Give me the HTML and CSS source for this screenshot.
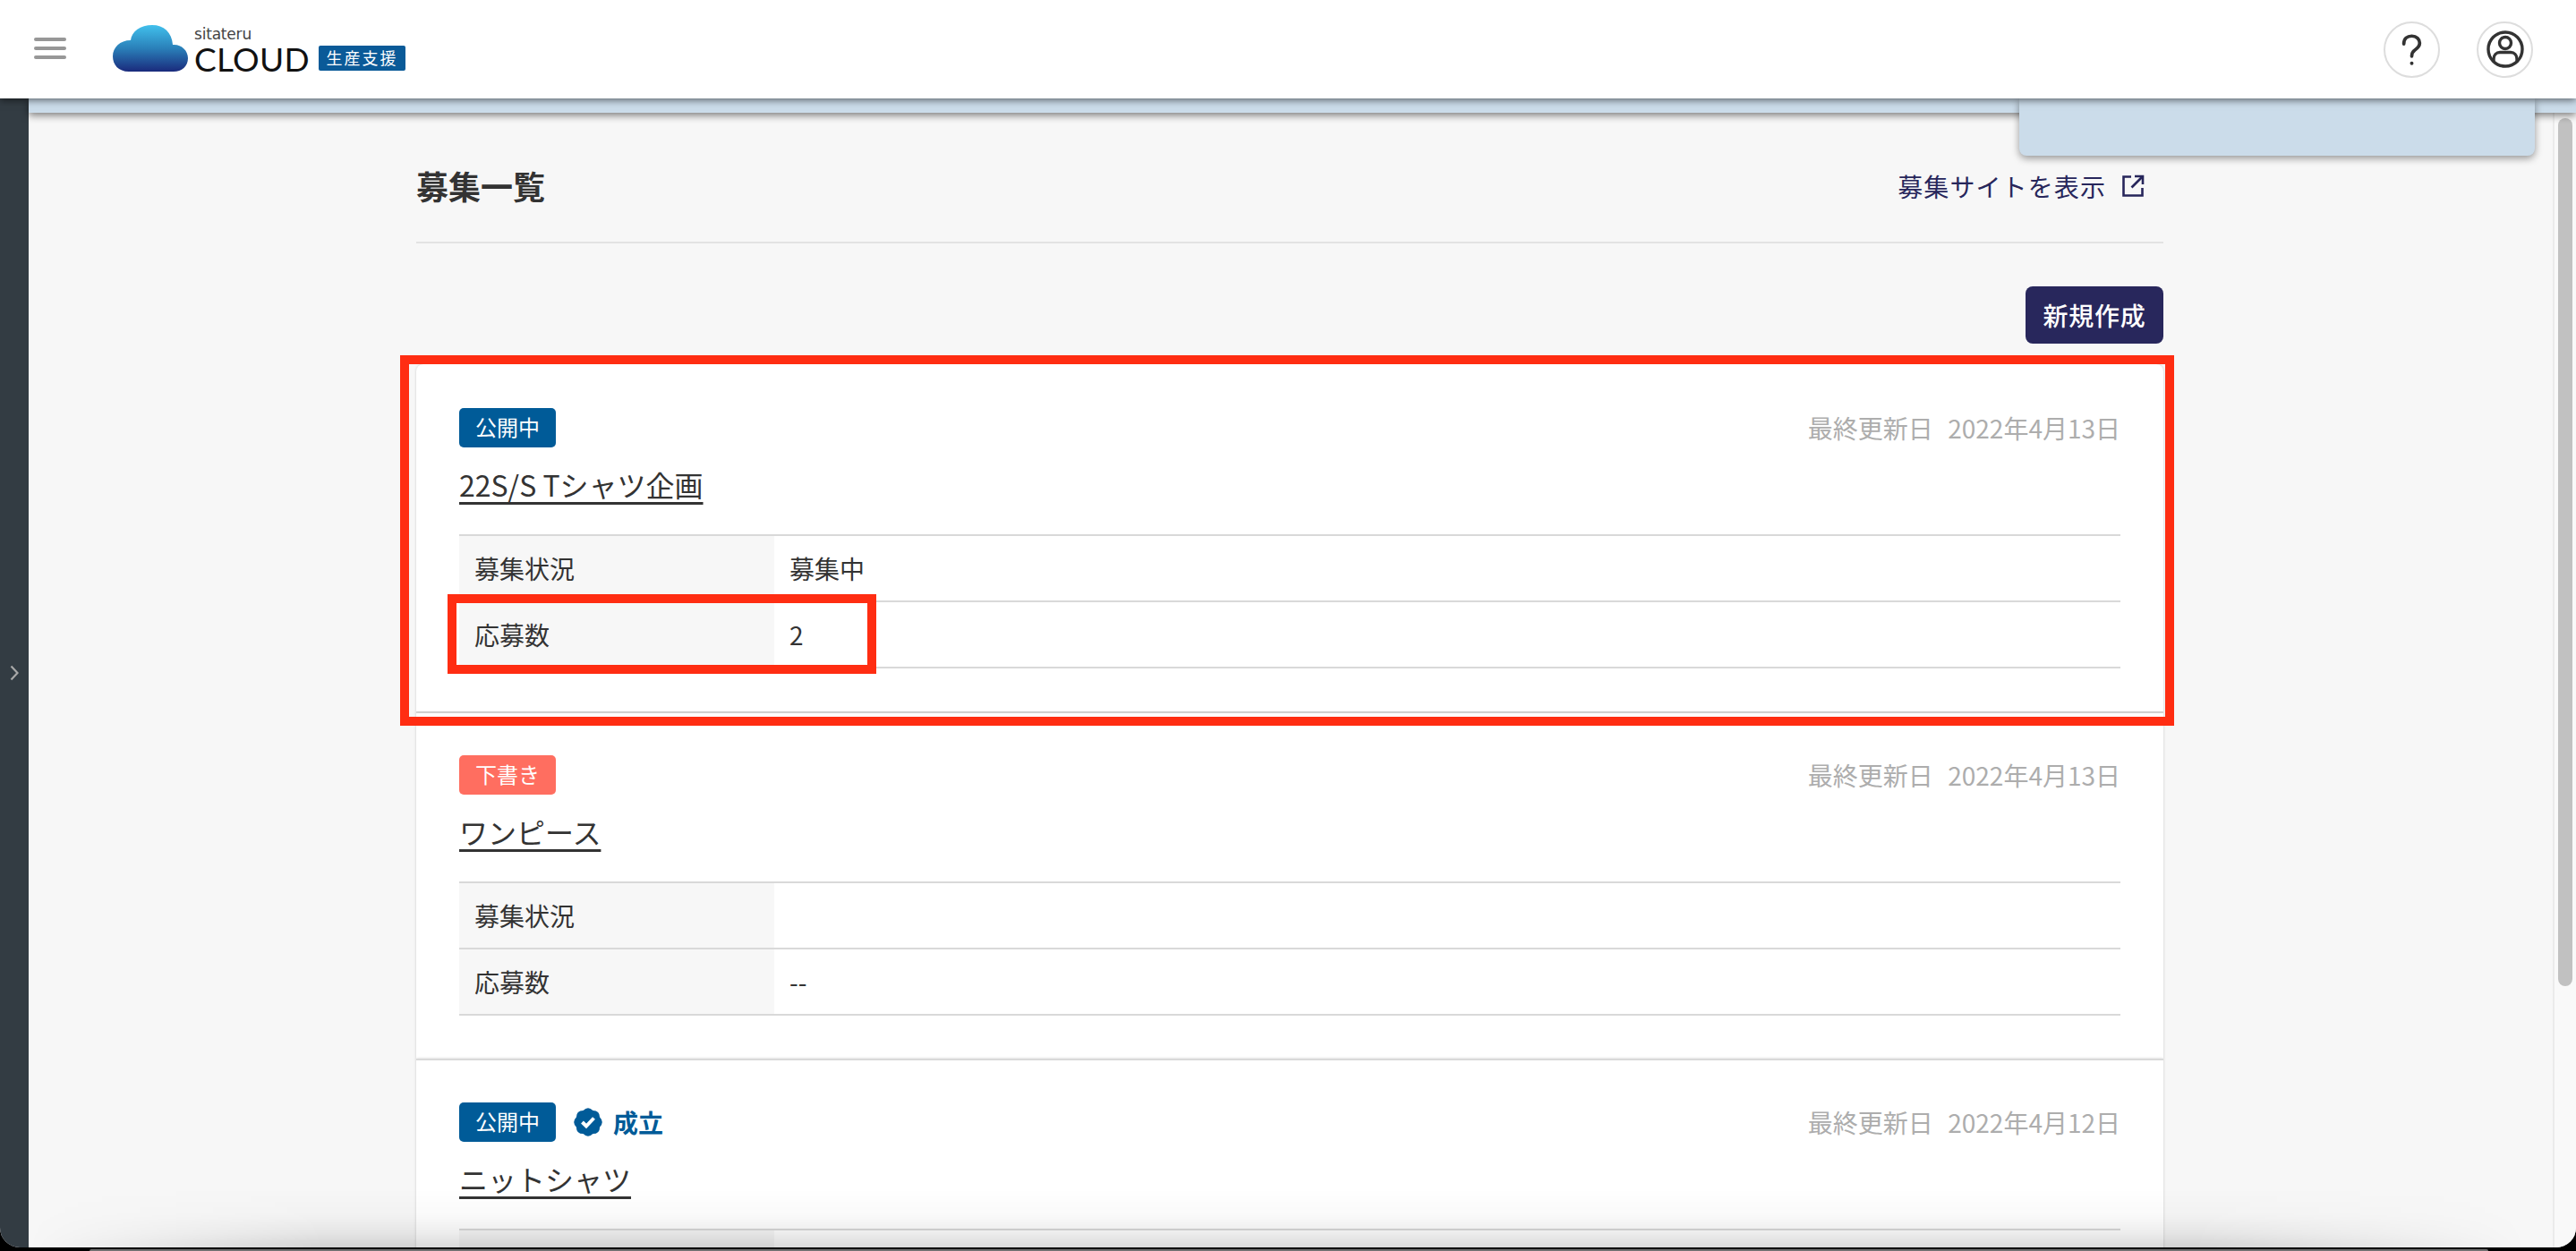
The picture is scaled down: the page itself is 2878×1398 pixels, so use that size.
FILE: index.html
```html
<!DOCTYPE html>
<html lang="ja">
<head>
<meta charset="utf-8">
<title>募集一覧</title>
<link rel="stylesheet" href="styles.css">
</head>
<body>
<div class="window">
  <header class="topbar">
    <button class="menu-btn" aria-label="メニュー"><span></span><span></span><span></span></button>
    <div class="logo">
      <svg class="logo-cloud" width="84" height="52" viewBox="0 0 84 52">
        <defs>
          <linearGradient id="cloudGrad" x1="0" y1="0" x2="0" y2="1">
            <stop offset="0" stop-color="#41c0ec"/>
            <stop offset="0.5" stop-color="#2a80b9"/>
            <stop offset="1" stop-color="#1a2a7c"/>
          </linearGradient>
        </defs>
        <path fill="url(#cloudGrad)" d="M18 52C6 52 0 44 0 35C0 25 8 17 20 17C21 7 31 0 44 0C57 0 66 8 67 22C76 21 84 28 84 37C84 46 77 52 68 52Z"/>
      </svg>
      <div class="logo-text">
        <span class="logo-sub">sitateru</span>
        <span class="logo-main">CLOUD</span>
      </div>
      <span class="logo-tag">生産支援</span>
    </div>
    <div class="topbar-actions">
      <button class="round-btn" aria-label="ヘルプ">
        <svg width="60" height="60" viewBox="0 0 60 60" fill="none" stroke="#333" stroke-width="3.800" stroke-linecap="round">
          <path d="M21 24C21 18 25 15 30 15C35.500 15 39 18.500 39 23C39 27 36.500 29 33.500 31C31 32.700 30 34 30 38"/>
          <circle cx="30" cy="46" r="2" fill="#333" stroke="none"/>
        </svg>
      </button>
      <button class="round-btn" aria-label="アカウント">
        <svg width="44" height="44" viewBox="0 0 44 44" fill="none" stroke="#333" stroke-width="3.400">
          <circle cx="22" cy="22" r="19"/>
          <circle cx="22" cy="15" r="6.500"/>
          <path d="M9 35.500V33C9 28.500 12 25.500 16 25.500H28C32 25.500 35 28.500 35 33V35.500"/>
        </svg>
      </button>
    </div>
  </header>

  <div class="workspace">
    <aside class="sidebar">
      <svg width="10" height="18" viewBox="0 0 10 18" fill="none" stroke="#a8a8a8" stroke-width="2.200"><path d="M1.500 1.500L8.500 9L1.500 16.500"/></svg>
    </aside>
    <div class="stage">
      <div class="notice-band"><div class="notice-panel"></div></div>
      <div class="stage-body">
        <main class="page">
          <div class="page-head">
            <h1 class="page-title">募集一覧</h1>
            <a class="site-link">募集サイトを表示
              <svg width="26" height="26" viewBox="0 0 26 26" fill="none" stroke="#27265b" stroke-width="2.600"><path d="M11 2.500H2.500V23.500H23.500V15"/><path d="M15 2H24V11"/><path d="M23.500 2.500L11.500 14.500"/></svg>
            </a>
          </div>
          <div class="page-actions"><button class="primary-btn">新規作成</button></div>

          <section class="card card-first">
            <div class="card-top">
              <div class="card-status"><span class="badge badge-public">公開中</span></div>
              <span class="card-date">最終更新日&nbsp;&nbsp;2022年4月13日</span>
            </div>
            <h2 class="card-title"><a>22S/S Tシャツ企画</a></h2>
            <div class="info">
              <div class="info-row"><div class="info-key">募集状況</div><div class="info-val">募集中</div></div>
              <div class="info-row"><div class="info-key">応募数</div><div class="info-val">2</div><div class="callout callout-row"></div></div>
            </div>
            <div class="callout callout-card"></div>
          </section>

          <section class="card">
            <div class="card-top">
              <div class="card-status"><span class="badge badge-draft">下書き</span></div>
              <span class="card-date">最終更新日&nbsp;&nbsp;2022年4月13日</span>
            </div>
            <h2 class="card-title"><a>ワンピース</a></h2>
            <div class="info">
              <div class="info-row"><div class="info-key">募集状況</div><div class="info-val"></div></div>
              <div class="info-row"><div class="info-key">応募数</div><div class="info-val">--</div></div>
            </div>
          </section>

          <section class="card">
            <div class="card-top">
              <div class="card-status">
                <span class="badge badge-public">公開中</span>
                <span class="matched">
                  <svg width="32" height="32" viewBox="0 0 32 32"><path fill="#005b98" d="M10.600 2.900Q16 -2.500 21.400 2.900Q29.100 2.900 29.100 10.600Q34.500 16 29.100 21.400Q29.100 29.100 21.400 29.100Q16 34.500 10.600 29.100Q2.900 29.100 2.900 21.400Q-2.500 16 2.900 10.600Q2.900 2.900 10.600 2.900Z"/><path fill="none" stroke="#fff" stroke-width="4" d="M9.500 16L14 20.500L22.500 11.500"/></svg>
                  成立
                </span>
              </div>
              <span class="card-date">最終更新日&nbsp;&nbsp;2022年4月12日</span>
            </div>
            <h2 class="card-title"><a>ニットシャツ</a></h2>
            <div class="info">
              <div class="info-row"><div class="info-key"></div><div class="info-val"></div></div>
            </div>
          </section>
        </main>
        <div class="scrollbar"><div class="scrollbar-thumb"></div></div>
        <div class="window-shade"></div>
      </div>
    </div>
  </div>
</div>
<div class="dock-edge"></div>
</body>
</html>
```
FILE: styles.css
```css
* { box-sizing: border-box; }
html, body { height: 100%; }
body {
  margin: 0;
  height: 1398px;
  overflow: hidden;
  background: #000;
  color: #333;
  font-family: "Noto Sans CJK JP", "Noto Sans", sans-serif;
}
button { font-family: inherit; border: 0; padding: 0; background: none; }
h1, h2 { margin: 0; }

.window {
  height: 1394px;
  display: flex;
  flex-direction: column;
  overflow: hidden;
  background: #f7f7f7;
  border-radius: 0 0 22px 22px;
}
.dock-edge {
  height: 2px;
  margin: 2px 98px 0 100px;
  background: #707070;
  border-radius: 2px 2px 0 0;
}

/* top bar */
.topbar {
  position: relative;
  z-index: 3;
  flex: none;
  height: 110px;
  display: flex;
  align-items: center;
  padding: 0 48px 0 38px;
  background: #fff;
  box-shadow: 0 2px 8px rgba(0, 0, 0, .55);
}
.menu-btn {
  width: 36px;
  height: 24px;
  margin-top: -2px;
  display: flex;
  flex-direction: column;
  justify-content: space-between;
}
.menu-btn span {
  height: 4px;
  border-radius: 2px;
  background: #979797;
}
.logo {
  display: flex;
  align-items: flex-end;
  margin-left: 52px;
  height: 52px;
  margin-top: -2px;
}
.logo-cloud { flex: none; }
.logo-text {
  display: flex;
  flex-direction: column;
  margin-left: 7px;
  font-family: Lato, "Noto Sans", sans-serif;
  color: #111;
}
.logo-sub {
  height: 18px;
  margin-bottom: 5px;
  font-family: "DejaVu Sans", sans-serif;
  font-size: 17px;
  line-height: 18px;
  font-weight: 400;
  letter-spacing: -.2px;
  color: #444;
}
.logo-main { height: 28px; font-size: 37px; line-height: 28px; letter-spacing: .3px; font-weight: 400; }
.logo-tag {
  margin: 0 0 1px 10px;
  width: 97px;
  height: 28px;
  line-height: 27px;
  text-align: center;
  font-size: 18px;
  letter-spacing: 2px;
  color: #fff;
  background: #0a5a98;
  border-radius: 2px;
}
.topbar-actions { margin-left: auto; display: flex; gap: 41px; }
.round-btn {
  width: 63px;
  height: 63px;
  border: 2px solid #ddd;
  border-radius: 50%;
  background: #fff;
  display: flex;
  align-items: center;
  justify-content: center;
}

/* workspace */
.workspace { flex: 1; min-height: 0; display: flex; }
.sidebar {
  position: relative;
  z-index: 2;
  flex: none;
  width: 32px;
  background: #333c43;
  display: flex;
  align-items: center;
  justify-content: center;
}
.stage { flex: 1; min-width: 0; display: flex; flex-direction: column; }
.notice-band {
  position: relative;
  z-index: 2;
  flex: none;
  height: 16px;
  background: #cbdcea;
  box-shadow: 0 3px 9px rgba(0, 0, 0, .5);
}
.notice-panel {
  position: absolute;
  top: 0;
  right: 46px;
  width: 576px;
  height: 64px;
  background: #cbdcea;
  border-radius: 0 0 8px 8px;
  box-shadow: 0 3px 8px rgba(0, 0, 0, .4);
}
.stage-body { position: relative; flex: 1; min-height: 0; display: flex; }
.page { flex: 1; min-width: 0; overflow: hidden; padding: 0 435px 0 433px; }
.scrollbar {
  flex: none;
  width: 26px;
  padding: 6px 4px 0 4px;
  background: #f9f9f9;
  border-left: 2px solid #ebebeb;
}
.scrollbar-thumb {
  width: 16px;
  height: 970px;
  border-radius: 8px;
  background: #c1c1c1;
}
.window-shade {
  position: absolute;
  left: 0;
  right: 0;
  bottom: 0;
  height: 66px;
  pointer-events: none;
  background: linear-gradient(to bottom, rgba(0, 0, 0, 0), rgba(0, 0, 0, .02) 45%, rgba(0, 0, 0, .07) 75%, rgba(0, 0, 0, .15));
  -webkit-mask-image: linear-gradient(to right, transparent 0, #000 330px, #000 2420px, transparent 2790px);
  mask-image: linear-gradient(to right, transparent 0, #000 330px, #000 2420px, transparent 2790px);
}

/* page head */
.page-head {
  display: flex;
  align-items: center;
  justify-content: space-between;
  padding: 54px 21px 34px 0;
  border-bottom: 2px solid #e3e3e3;
}
.page-title { font-size: 36px; line-height: 54px; padding-bottom: 2px; font-weight: 700; color: #333; }
.site-link {
  display: flex;
  align-items: center;
  gap: 17px;
  font-size: 28px;
  letter-spacing: 1.100px;
  color: #27265b;
}
.page-actions { display: flex; justify-content: flex-end; margin: 48px 0 23px; }
.primary-btn {
  width: 154px;
  height: 64px;
  border-radius: 8px;
  background: #28275c;
  color: #fff;
  font-size: 28px;
  font-weight: 500;
  letter-spacing: .8px;
}

/* cards */
.card {
  position: relative;
  padding: 47px 48px 48px;
  background: #fff;
  border-top: 2px solid #d9d9d9;
  box-shadow: 0 0 3px rgba(0, 0, 0, .18);
}
.card-first { z-index: 1; border-top-color: #fff; border-radius: 8px 8px 0 0; }
.card-top { display: flex; align-items: center; justify-content: space-between; height: 44px; }
.card-status { display: flex; align-items: center; }
.badge {
  width: 108px;
  height: 44px;
  line-height: 42px;
  text-align: center;
  font-size: 24px;
  color: #fff;
  border-radius: 5px;
}
.badge-public { background: #005b98; }
.badge-draft { background: #ff6e60; }
.matched {
  display: flex;
  align-items: center;
  gap: 12px;
  margin-left: 20px;
  font-size: 28px;
  font-weight: 700;
  color: #005b98;
}
.card-date { font-size: 28px; word-spacing: 2px; color: #adadad; }
.card-title {
  margin: 17px 0 32px;
  height: 48px;
  font-size: 32px;
  line-height: 48px;
  font-weight: 400;
  color: #333;
}
.card-title a {
  text-decoration: underline;
  text-decoration-thickness: 3px;
  text-underline-offset: 6px;
}
.info { border-top: 2px solid #d9d9d9; }
.info-row {
  position: relative;
  display: flex;
  height: 74px;
  border-bottom: 2px solid #d9d9d9;
  font-size: 28px;
  line-height: 72px;
}
.info-key { flex: none; width: 352px; padding-left: 17px; background: #f7f7f7; }
.info-val { flex: 1; padding-left: 17px; }

/* annotation frames */
.callout { position: absolute; border: 10px solid #ff2d12; pointer-events: none; }
.callout-card { top: -12px; left: -18px; right: -12px; bottom: -16px; }
.callout-row { top: -9px; left: -13px; width: 479px; bottom: -8px; }
```
